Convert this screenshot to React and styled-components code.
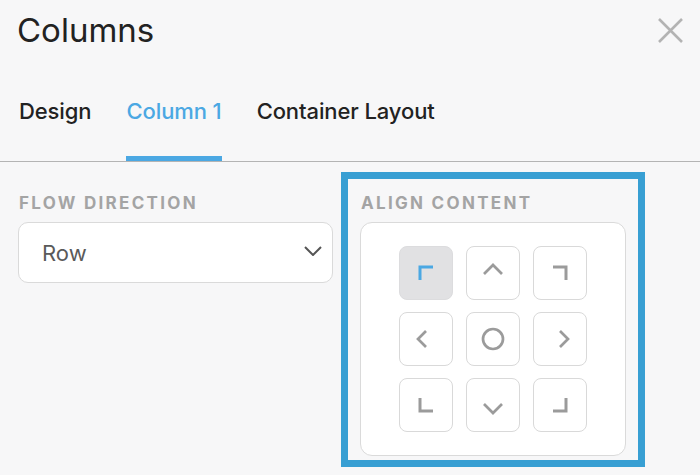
import React from 'react';
import styled, { createGlobalStyle } from 'styled-components';

const GlobalStyle = createGlobalStyle`
	html, body {
		margin: 0;
		padding: 0;
		background: #f7f7f8;
	}
	body {
		font-family: Inter, 'Liberation Sans', sans-serif;
		color: #222;
	}
`;

const TABS = ['Design', 'Column 1', 'Container Layout'];

// 24x24 paths for each cell of the alignment pad
const ALIGN_ICONS = [
	{ id: 'top-left', d: 'M6 19V6h13' },
	{ id: 'top', d: 'M3 13l9-9 9 9' },
	{ id: 'top-right', d: 'M5 6h13v13' },
	{ id: 'left', d: 'M12 4l-8 8 8 8' },
	{ id: 'center', circle: true },
	{ id: 'right', d: 'M12 4l8 8-8 8' },
	{ id: 'bottom-left', d: 'M6 5v13h13' },
	{ id: 'bottom', d: 'M3 11l9 9 9-9' },
	{ id: 'bottom-right', d: 'M5 18h13V5' },
];

function AlignIcon({ d, circle, corner }) {
	return (
		<svg width="24" height="24" viewBox="0 0 24 24" fill="none" stroke="currentColor"
			strokeWidth={corner ? 3 : 2.7} strokeLinejoin="miter" strokeLinecap="butt">
			{circle ? <circle cx="12" cy="12" r="10" /> : <path d={d} />}
		</svg>
	);
}

export default function App() {
	const active = 'top-left';
	return (
		<>
			<GlobalStyle />
			<Panel>
				<Header>
					<Title>Columns</Title>
					<CloseButton aria-label="Close">
						<svg width="25" height="25" viewBox="0 0 25 25" stroke="currentColor" strokeWidth="2.6">
							<path d="M1 1l23 23M24 1L1 24" />
						</svg>
					</CloseButton>
				</Header>
				<TabBar>
					{TABS.map((t) => (
						<Tab key={t} active={t === 'Column 1'}>{t}</Tab>
					))}
				</TabBar>
				<Body>
					<Field>
						<Label>Flow Direction</Label>
						<Select>
							<span>Row</span>
							<svg width="18" height="10" viewBox="0 0 18 10" fill="none" stroke="currentColor" strokeWidth="2">
								<path d="M1 1l8 8 8-8" />
							</svg>
						</Select>
					</Field>
					<Field selected>
						<Label>Align Content</Label>
						<AlignBox>
							<AlignGrid>
								{ALIGN_ICONS.map((icon) => (
									<AlignButton key={icon.id} active={icon.id === active}>
										<AlignIcon d={icon.d} circle={icon.circle} corner={icon.id.includes('-')} />
									</AlignButton>
								))}
							</AlignGrid>
						</AlignBox>
					</Field>
				</Body>
			</Panel>
		</>
	);
}

const Panel = styled.div`
	width: 700px;
	height: 475px;
	overflow: hidden;
`;

const Header = styled.div`
	display: flex;
	justify-content: space-between;
	align-items: center;
	padding: 10px 17px 0 17px;
`;

const Title = styled.h1`
	margin: 0;
	font-size: 33px;
	line-height: 40px;
	font-weight: 400;
	color: #222;
`;

const CloseButton = styled.button`
	display: flex;
	padding: 0;
	border: 0;
	background: transparent;
	color: #b3b3b3;
`;

const TabBar = styled.div`
	display: flex;
	gap: 35px;
	margin-top: 48px;
	padding-left: 19px;
	border-bottom: 1.5px solid #b4b4b4;
`;

const Tab = styled.div`
	font-size: 22px;
	line-height: 26px;
	font-weight: 500;
	letter-spacing: -0.1px;
	padding-bottom: 32px;
	color: ${({ active }) => (active ? '#4ba8e3' : '#222')};
	border-bottom: 5px solid ${({ active }) => (active ? '#4ba8e3' : 'transparent')};
`;

const Body = styled.div`
	display: grid;
	grid-template-columns: 315px 266px;
	column-gap: 27px;
	padding: 31px 0 0 18px;
	align-items: start;
`;

const Field = styled.div`
	position: relative;
	display: flex;
	flex-direction: column;
	gap: 9px;

	${({ selected }) => selected && `
		&::after {
			content: '';
			position: absolute;
			top: -21px;
			left: -19px;
			right: -19px;
			bottom: -11px;
			border: 7px solid #389fd3;
			pointer-events: none;
		}
	`}
`;

const Label = styled.div`
	font-size: 17px;
	line-height: 20px;
	font-weight: 700;
	letter-spacing: 2.3px;
	text-transform: uppercase;
	color: #a4a4a4;
	padding-left: 1px;
`;

const Select = styled.div`
	display: flex;
	align-items: center;
	justify-content: space-between;
	height: 61px;
	box-sizing: border-box;
	padding: 0 10px 0 23px;
	background: #fff;
	border: 1.5px solid #dadada;
	border-radius: 10px;
	font-size: 22px;
	color: #5a5a5a;
	svg {
		color: #555;
		margin-top: -3px;
	}
`;

const AlignBox = styled.div`
	background: #fff;
	border: 1.5px solid #dadada;
	border-radius: 12px;
	padding: 23px 0;
`;

const AlignGrid = styled.div`
	display: grid;
	grid-template-columns: repeat(3, 54px);
	grid-auto-rows: 54px;
	column-gap: 13px;
	row-gap: 12px;
	justify-content: center;
`;

const AlignButton = styled.button`
	display: flex;
	align-items: center;
	justify-content: center;
	padding: 0;
	box-sizing: border-box;
	border: 1.5px solid ${({ active }) => (active ? '#dcdcde' : '#d9d9d9')};
	border-radius: 8px;
	background: ${({ active }) => (active ? '#e1e1e3' : '#fff')};
	color: ${({ active }) => (active ? '#4ba8e3' : '#9b9b9b')};
`;
